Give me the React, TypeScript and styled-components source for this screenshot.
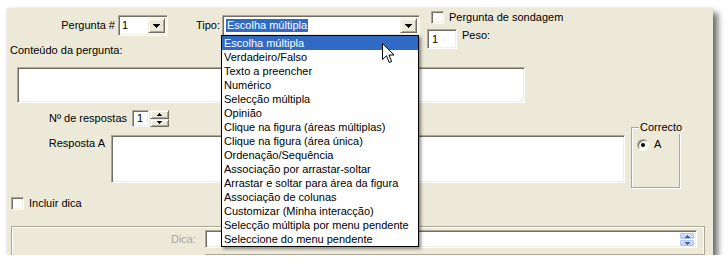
import { FC } from 'react';
import styled, { createGlobalStyle, css } from 'styled-components';

const GlobalStyle = createGlobalStyle`
    * { box-sizing: border-box; }
    body {
        margin: 0;
        background: #ffffff;
        font-family: "Liberation Sans", Arial, sans-serif;
        font-size: 11px;
        color: #000000;
    }
`;

const sunken = css`
    border: 1px solid;
    border-color: #aca899 #ffffff #ffffff #aca899;
    box-shadow: inset 1px 1px 0 #716f64, inset -1px -1px 0 #f1efe2;
`;

const raised = css`
    background: #ece9d8;
    border: 1px solid;
    border-color: #f1efe2 #716f64 #716f64 #f1efe2;
    box-shadow: inset 1px 1px 0 #ffffff, inset -1px -1px 0 #aca899;
`;

const Page = styled.div`
    padding: 8px 0 0 7px;
`;

const Panel = styled.div`
    position: relative;
    width: 706px;
    height: 247px;
    background: #ece9d8;
    box-shadow: 5px 5px 6px rgba(0, 0, 0, 0.55), 0 0 3px rgba(0, 0, 0, 0.12);
    overflow: hidden;
`;

const TopArea = styled.div`
    display: flex;
    align-items: flex-start;
`;

const LeftTop = styled.div`
    width: 413px;
`;

const TopRow = styled.div`
    display: flex;
    align-items: center;
    margin-top: 7px;
    height: 21px;
`;

const Label = styled.span<{ $w?: number; $gap?: number; $muted?: boolean }>`
    display: inline-block;
    width: ${p => (p.$w ? `${p.$w}px` : 'auto')};
    margin-right: ${p => p.$gap ?? 0}px;
    text-align: ${p => (p.$w ? 'right' : 'left')};
    line-height: 13px;
    white-space: nowrap;
    color: ${p => (p.$muted ? '#aca899' : '#000000')};
`;

const ComboBox = styled.div<{ $w: number }>`
    ${sunken};
    position: relative;
    display: flex;
    width: ${p => p.$w}px;
    height: 21px;
    background: #ffffff;
    padding: 2px;
`;

const ComboValue = styled.div`
    flex: 1;
    display: flex;
    align-items: center;
    padding-left: 1px;
    line-height: 13px;
`;

const Selected = styled.span`
    background: #316ac5;
    color: #ffffff;
    padding: 0 1px;
`;

const ComboButton = styled.div`
    ${raised};
    width: 17px;
    display: flex;
    align-items: center;
    justify-content: center;
`;

const ContentLabel = styled.div`
    margin-top: 8px;
    padding-left: 3px;
    line-height: 13px;
`;

const RightTop = styled.div`
    margin-left: 7px;
    margin-top: 3px;
    display: flex;
    flex-direction: column;
`;

const CheckRow = styled.div<{ $pad?: number }>`
    display: flex;
    align-items: center;
    padding-left: ${p => p.$pad ?? 0}px;
    line-height: 13px;
`;

const CheckBox = styled.span`
    ${sunken};
    display: inline-block;
    width: 13px;
    height: 13px;
    background: #ffffff;
    margin-right: 5px;
`;

const PesoRow = styled.div`
    display: flex;
    align-items: flex-start;
    margin-top: 5px;
`;

const TextField = styled.div<{ $w: number; $h: number }>`
    ${sunken};
    width: ${p => p.$w}px;
    height: ${p => p.$h}px;
    background: #ffffff;
    padding: 0 4px;
    display: flex;
    align-items: center;
    line-height: 13px;
`;

const TextArea = styled.div<{ $w: number; $h: number; $ml?: number; $mt?: number }>`
    ${sunken};
    width: ${p => p.$w}px;
    height: ${p => p.$h}px;
    margin-left: ${p => p.$ml ?? 0}px;
    margin-top: ${p => p.$mt ?? 0}px;
    background: #ffffff;
    flex-shrink: 0;
`;

const CountRow = styled.div`
    display: flex;
    align-items: center;
    margin-top: 7px;
    height: 17px;
`;

const SpinPair = styled.div`
    display: flex;
    flex-direction: column;
    width: 19px;
    height: 17px;
    margin-left: 1px;
`;

const SpinButton = styled.div`
    ${raised};
    flex: 1;
    display: flex;
    align-items: center;
    justify-content: center;
`;

const AnswerRow = styled.div`
    display: flex;
    align-items: flex-start;
    margin-top: 8px;
`;

const AnswerLabel = styled(Label)`
    margin-top: 2px;
`;

const GroupBox = styled.div`
    position: relative;
    width: 49px;
    height: 61px;
    margin: -8px 0 0 6px;
    border: 1px solid #aca899;
    box-shadow: inset 1px 1px 0 #ffffff, 1px 1px 0 #ffffff;
    padding: 10px 0 0 5px;
`;

const GroupTitle = styled.span`
    position: absolute;
    top: -7px;
    left: 7px;
    padding: 0 1px;
    background: #ece9d8;
    line-height: 13px;
`;

const RadioRow = styled.div`
    display: flex;
    align-items: center;
    line-height: 13px;
`;

const Radio = styled.span`
    display: inline-flex;
    align-items: center;
    justify-content: center;
    width: 12px;
    height: 12px;
    border-radius: 50%;
    border: 1px solid;
    border-color: #aca899 #ffffff #ffffff #aca899;
    box-shadow: inset 1px 1px 0 #716f64;
    background: #f7f6f1;
    margin-right: 5px;
    &::after {
        content: '';
        width: 4px;
        height: 4px;
        border-radius: 50%;
        background: #000000;
    }
`;

const IncluirRow = styled(CheckRow)`
    margin-top: 9px;
`;

const DicaPanel = styled.div`
    margin: 16px 0 0 4px;
    width: 694px;
    height: 40px;
    border: 1px solid;
    border-color: #aca899 #aca899 #aca899 #aca899;
    box-shadow: inset 1px 1px 0 #ffffff, inset -1px 0 0 #ffffff;
    padding: 2px 0 0 1px;
`;

const DicaRow = styled.div`
    display: flex;
    align-items: center;
    margin-top: 1px;
`;

const DicaField = styled.div`
    ${sunken};
    width: 492px;
    height: 18px;
    background: #ffffff;
    display: flex;
    justify-content: flex-end;
    padding: 2px 2px 1px 0;
`;

const BlueSpin = styled.div`
    display: flex;
    flex-direction: column;
    gap: 1px;
    width: 14px;
`;

const BlueButton = styled.div`
    flex: 1;
    display: flex;
    align-items: center;
    justify-content: center;
    border: 1px solid #b4c6ef;
    border-radius: 1px;
    background: linear-gradient(#d6e1fc, #b8cbf6);
`;

const NextBox = styled.div`
    margin: 6px 0 0 192px;
    height: 10px;
    border-top: 1px solid #aca899;
    box-shadow: inset 0 1px 0 #716f64;
`;

const DropList = styled.div`
    position: absolute;
    left: -2px;
    top: 19px;
    width: 198px;
    height: 212px;
    background: #ffffff;
    border: 1px solid #000000;
    box-shadow: 2px 2px 3px rgba(0, 0, 0, 0.45);
    z-index: 5;
`;

const DropItem = styled.div<{ $active?: boolean }>`
    height: 14px;
    line-height: 14px;
    padding-left: 2px;
    white-space: nowrap;
    background: ${p => (p.$active ? '#316ac5' : 'transparent')};
    color: ${p => (p.$active ? '#ffffff' : '#000000')};
`;

const Cursor = styled.svg`
    position: absolute;
    left: 160px;
    top: 7px;
    z-index: 6;
`;

const types = [
    'Escolha múltipla',
    'Verdadeiro/Falso',
    'Texto a preencher',
    'Numérico',
    'Selecção múltipla',
    'Opinião',
    'Clique na figura (áreas múltiplas)',
    'Clique na figura (área única)',
    'Ordenação/Sequência',
    'Associação por arrastar-soltar',
    'Arrastar e soltar para área da figura',
    'Associação de colunas',
    'Customizar (Minha interacção)',
    'Selecção múltipla por menu pendente',
    'Seleccione do menu pendente',
];

const DownArrow: FC = () => (
    <svg width="7" height="4" shapeRendering="crispEdges">
        <path d="M0 0h7v1H0zM1 1h5v1H1zM2 2h3v1H2zM3 3h1v1H3z" fill="#000" />
    </svg>
);

const SmallArrow: FC<{ up?: boolean; color?: string }> = ({ up, color = '#000' }) => (
    <svg width="5" height="3" shapeRendering="crispEdges">
        {up ? (
            <path d="M2 0h1v1H2zM1 1h3v1H1zM0 2h5v1H0z" fill={color} />
        ) : (
            <path d="M0 0h5v1H0zM1 1h3v1H1zM2 2h1v1H2z" fill={color} />
        )}
    </svg>
);

export default function App() {
    return (
        <>
            <GlobalStyle />
            <Page>
                <Panel>
                    <TopArea>
                        <LeftTop>
                            <TopRow>
                                <Label $w={108} $gap={3}>Pergunta #</Label>
                                <ComboBox $w={50}>
                                    <ComboValue>1</ComboValue>
                                    <ComboButton><DownArrow /></ComboButton>
                                </ComboBox>
                                <Label $w={52} $gap={2}>Tipo:</Label>
                                <ComboBox $w={198}>
                                    <ComboValue><Selected>Escolha múltipla</Selected></ComboValue>
                                    <ComboButton><DownArrow /></ComboButton>
                                    <DropList>
                                        {types.map((t, i) => (
                                            <DropItem key={t} $active={i === 0}>{t}</DropItem>
                                        ))}
                                        <Cursor width="13" height="21" viewBox="0 0 13 21">
                                            <path
                                                d="M0.5 0.5 L0.5 16.5 L4.5 12.8 L7.2 19.5 L9.6 18.5 L7 12 L12 12 Z"
                                                fill="#fff"
                                                stroke="#000"
                                                strokeWidth="1"
                                            />
                                        </Cursor>
                                    </DropList>
                                </ComboBox>
                            </TopRow>
                            <ContentLabel>Conteúdo da pergunta:</ContentLabel>
                        </LeftTop>
                        <RightTop>
                            <CheckRow $pad={4}>
                                <CheckBox />
                                Pergunta de sondagem
                            </CheckRow>
                            <PesoRow>
                                <TextField $w={30} $h={20}>1</TextField>
                                <Label style={{ marginLeft: 5 }}>Peso:</Label>
                            </PesoRow>
                        </RightTop>
                    </TopArea>

                    <TextArea $w={508} $h={36} $ml={10} $mt={10} />

                    <CountRow>
                        <Label $w={120} $gap={5}>Nº de respostas</Label>
                        <TextField $w={17} $h={17}>1</TextField>
                        <SpinPair>
                            <SpinButton><SmallArrow up /></SpinButton>
                            <SpinButton><SmallArrow /></SpinButton>
                        </SpinPair>
                    </CountRow>

                    <AnswerRow>
                        <AnswerLabel $w={98} $gap={6}>Resposta A</AnswerLabel>
                        <TextArea $w={514} $h={48} />
                        <GroupBox>
                            <GroupTitle>Correcto</GroupTitle>
                            <RadioRow>
                                <Radio />
                                A
                            </RadioRow>
                        </GroupBox>
                    </AnswerRow>

                    <IncluirRow $pad={4}>
                        <CheckBox />
                        Incluir dica
                    </IncluirRow>

                    <DicaPanel>
                        <DicaRow>
                            <Label $w={183} $gap={9} $muted>Dica:</Label>
                            <DicaField>
                                <BlueSpin>
                                    <BlueButton><SmallArrow up color="#4d6185" /></BlueButton>
                                    <BlueButton><SmallArrow color="#4d6185" /></BlueButton>
                                </BlueSpin>
                            </DicaField>
                        </DicaRow>
                        <NextBox />
                    </DicaPanel>
                </Panel>
            </Page>
        </>
    );
}
